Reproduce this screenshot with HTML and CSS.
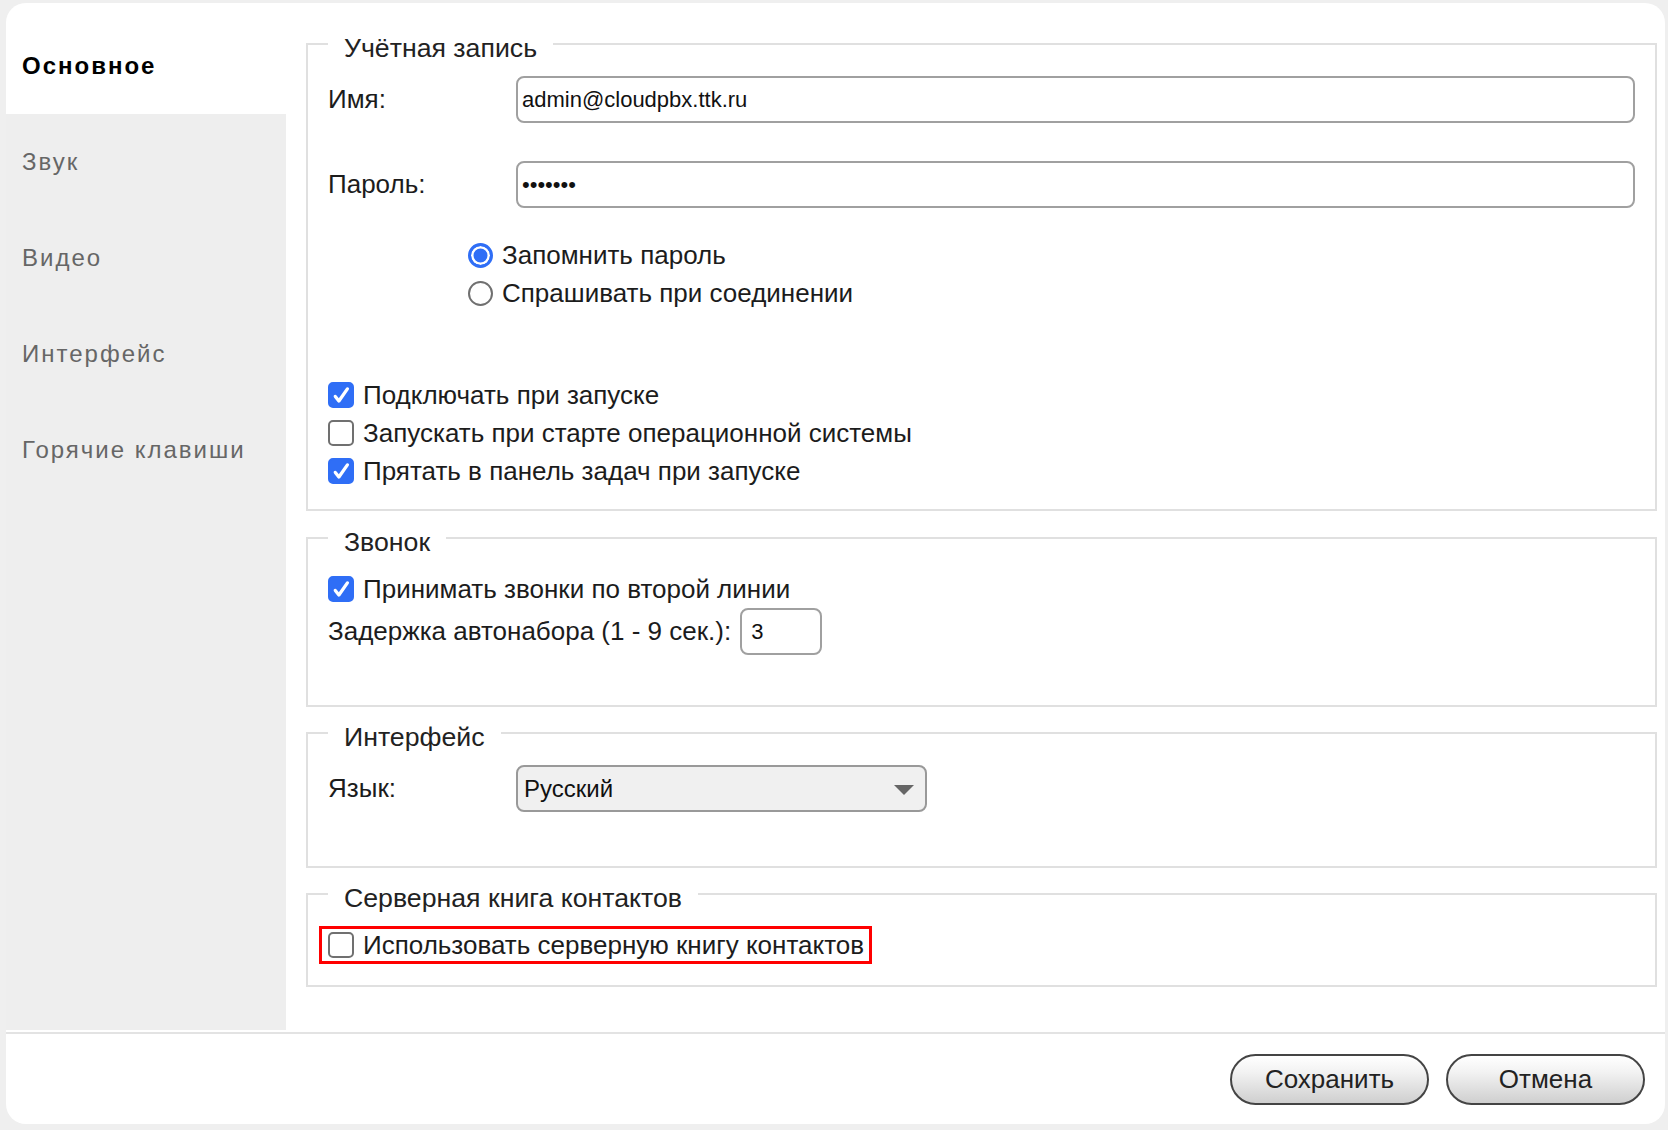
FILE: index.html
```html
<!DOCTYPE html>
<html>
<head>
	<meta charset="utf-8">
	<title>Настройки</title>
	<link rel="stylesheet" href="styles.css">
</head>
<body>
	<div class="window">
		<div class="main">
			<div class="sidebar">
				<div class="nav-item active">Основное</div>
				<div class="nav-item">Звук</div>
				<div class="nav-item">Видео</div>
				<div class="nav-item">Интерфейс</div>
				<div class="nav-item">Горячие клавиши</div>
			</div>
			<div class="content">
				<fieldset class="group group-account">
					<legend>Учётная запись</legend>
					<div class="row">
						<label class="row-label" for="login">Имя:</label>
						<input type="text" id="login" class="field" value="admin@cloudpbx.ttk.ru">
					</div>
					<div class="row">
						<label class="row-label" for="password">Пароль:</label>
						<input type="password" id="password" class="field" value="1234567">
					</div>
					<div class="radios">
						<label class="option"><span class="radio on"></span>Запомнить пароль</label>
						<label class="option"><span class="radio"></span>Спрашивать при соединении</label>
					</div>
					<div class="checks">
						<label class="option">
							<span class="box on"><svg viewBox="0 0 22 22"><path d="M5.3 12.4 L8.9 17 L17.4 4.9"/></svg></span>Подключать при запуске
						</label>
						<label class="option"><span class="box"></span>Запускать при старте операционной системы</label>
						<label class="option">
							<span class="box on"><svg viewBox="0 0 22 22"><path d="M5.3 12.4 L8.9 17 L17.4 4.9"/></svg></span>Прятать в панель задач при запуске
						</label>
					</div>
				</fieldset>

				<fieldset class="group group-call">
					<legend>Звонок</legend>
					<label class="option">
						<span class="box on"><svg viewBox="0 0 22 22"><path d="M5.3 12.4 L8.9 17 L17.4 4.9"/></svg></span>Принимать звонки по второй линии
					</label>
					<div class="row">
						<label for="delay">Задержка автонабора (1 - 9 сек.):</label>
						<input type="text" id="delay" class="field field-small" value="3">
					</div>
				</fieldset>

				<fieldset class="group group-ui">
					<legend>Интерфейс</legend>
					<div class="row">
						<label class="row-label" for="lang">Язык:</label>
						<div class="select">
							<select id="lang">
								<option>Русский</option>
								<option>English</option>
							</select>
						</div>
					</div>
				</fieldset>

				<fieldset class="group group-book">
					<legend>Серверная книга контактов</legend>
					<label class="option highlight"><span class="box"></span>Использовать серверную книгу контактов</label>
				</fieldset>
			</div>
		</div>
		<div class="footer">
			<button class="btn">Сохранить</button>
			<button class="btn">Отмена</button>
		</div>
	</div>
</body>
</html>
```

FILE: styles.css
```css
/* Reset default margin, padding, and box-sizing */
* {
	margin: 0;
	padding: 0;
	box-sizing: border-box;
}

html {
	background: #efefef;
}

body {
	height: 1130px;
	padding: 3px 3px 6px 6px;
	font-family: "Liberation Sans", Arial, sans-serif;
	color: #1c1c1c;
}

.window {
	height: 100%;
	background: #fff;
	border-radius: 20px;
	display: flex;
	flex-direction: column;
	overflow: hidden;
}

.main {
	flex: 1;
	display: flex;
	min-height: 0;
}

/* Left menu */
.sidebar {
	width: 280px;
	flex-shrink: 0;
	background: #eee;
}

.sidebar .nav-item {
	height: 96px;
	display: flex;
	align-items: center;
	padding-left: 16px;
	font-size: 24px;
	letter-spacing: 2px;
	color: #666;
}

.sidebar .nav-item.active {
	height: 111px;
	padding-top: 15px;
	background: #fff;
	color: #000;
	font-weight: 700;
}

/* Settings groups */
.content {
	flex: 1;
	padding: 21px 8px 0 20px;
}

.group {
	min-width: 0;
	border: 2px solid #e0e0e0;
	padding: 13px 20px 19px;
	margin-bottom: 6px;
}

.group legend {
	padding: 9px 16px 0;
	font-size: 26.7px;
	line-height: 30px;
	color: #222;
}

.group-account {
	margin-bottom: 7px;
}

.group-call {
	padding-bottom: 50px;
}

.group-ui {
	padding-bottom: 54px;
}

.group-book {
	padding-bottom: 21px;
}

.row {
	display: flex;
	align-items: center;
	height: 47px;
	font-size: 26px;
}

.row + .row {
	margin-top: 38px;
}

.group-call .option + .row {
	margin-top: 0;
}

.row-label {
	width: 188px;
	flex-shrink: 0;
}

.field {
	flex: 1;
	height: 47px;
	border: 2px solid #a0a0a0;
	border-radius: 8px;
	padding: 0 4px;
	background: #fff;
	font-family: "Liberation Sans", Arial, sans-serif;
	font-size: 22px;
	color: #111;
	outline: none;
}

.field-small {
	flex: none;
	width: 82px;
	margin-left: 9px;
	padding: 0 9px;
}

.select {
	position: relative;
	width: 411px;
	height: 47px;
}

.select select {
	width: 100%;
	height: 100%;
	appearance: none;
	-webkit-appearance: none;
	background: #f0f0f0;
	border: 2px solid #999;
	border-radius: 8px;
	padding: 0 6px;
	font-family: "Liberation Sans", Arial, sans-serif;
	font-size: 24px;
	color: #111;
	outline: none;
}

.select::after {
	content: "";
	position: absolute;
	right: 13px;
	top: 20px;
	border-left: 10px solid transparent;
	border-right: 10px solid transparent;
	border-top: 10px solid #666;
	pointer-events: none;
}

/* Radio buttons and checkboxes */
.radios {
	margin-top: 28px;
	padding-left: 140px;
}

.checks {
	margin-top: 64px;
}

.option {
	display: flex;
	align-items: center;
	gap: 9px;
	height: 38px;
	font-size: 26px;
}

.radio {
	width: 25px;
	height: 25px;
	flex-shrink: 0;
	border-radius: 50%;
	border: 2px solid #707070;
	background: #fff;
}

.radio.on {
	border: 3px solid #2f6ef6;
	background: #2f6ef6;
	box-shadow: inset 0 0 0 2.5px #fff;
}

.box {
	width: 26px;
	height: 26px;
	flex-shrink: 0;
	display: flex;
	align-items: center;
	justify-content: center;
	border: 2px solid #707070;
	border-radius: 5px;
	background: #fff;
}

.box.on {
	background: #2f6ef6;
	border-color: #2f6ef6;
}

.box svg {
	width: 22px;
	height: 22px;
}

.box svg path {
	fill: none;
	stroke: #fff;
	stroke-width: 3.3;
	stroke-linecap: round;
	stroke-linejoin: round;
}

.highlight {
	display: inline-flex;
	margin-left: -9px;
	padding: 0 5px 0 6px;
	border: 3px solid #f00;
}

/* Bottom buttons */
.footer {
	margin-top: 2px;
	border-top: 2px solid #e3e3e3;
	padding: 20px 20px 19px;
	display: flex;
	justify-content: flex-end;
	gap: 17px;
}

.btn {
	width: 199px;
	height: 51px;
	border: 2px solid #444;
	border-radius: 26px;
	background: linear-gradient(#fff, #f2f2f2 35%, #cfcfcf);
	font-family: "Liberation Sans", Arial, sans-serif;
	font-size: 26px;
	color: #222;
	cursor: pointer;
}
```
